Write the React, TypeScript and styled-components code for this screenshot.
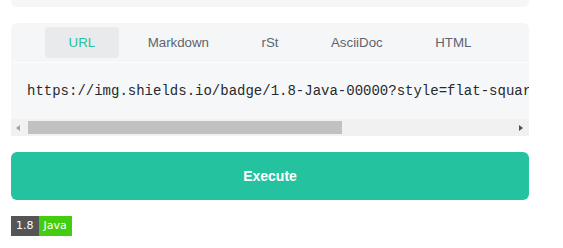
import React, { useState } from "react";
import styled, { createGlobalStyle } from "styled-components";

const Global = createGlobalStyle`
  html, body { margin: 0; padding: 0; background: #ffffff; }
  body { font-family: "Liberation Sans", Arial, sans-serif; }
`;

const Page = styled.div`
  width: 518px;
  padding-left: 11px;
  display: flex;
  flex-direction: column;
`;

const PrevCardEdge = styled.div`
  height: 7px;
  background: #f5f6f7;
  border-radius: 0 0 6px 6px;
`;

const Card = styled.div`
  margin-top: 16px;
  background: #f5f6f7;
  border-radius: 6px 6px 0 0;
  overflow: hidden;
  display: flex;
  flex-direction: column;
`;

const TabList = styled.div`
  display: flex;
  justify-content: center;
  gap: 4.5px;
  padding: 4px 0 4px;
  border-bottom: 1px solid #fdfdfe;
`;

const Tab = styled.button<{ $active?: boolean }>`
  border: 0;
  margin: 0;
  height: 31px;
  padding: 0 24px;
  border-radius: 4px;
  background: ${(p) => (p.$active ? "#e9eaec" : "transparent")};
  color: ${(p) => (p.$active ? "#25c2a0" : "#5c6470")};
  font-family: "Liberation Sans", Arial, sans-serif;
  font-size: 13.3px;
  cursor: pointer;
`;

const CodeBox = styled.div`
  background: #f6f7f8;
  overflow: hidden;
  padding: 16px;
  height: 24px;
`;

const Code = styled.pre`
  margin: 0;
  margin-top: -1px;
  font-family: "Liberation Mono", "Courier New", monospace;
  font-size: 14px;
  line-height: 26px;
  color: #262a2f;
  white-space: pre;
`;

const ScrollTrack = styled.div`
  height: 17px;
  background: #f1f1f1;
  display: flex;
  align-items: center;
  padding: 0 6px 0 5px;
`;

const Arrow = styled.span<{ $dir: "left" | "right"; $enabled?: boolean }>`
  width: 0;
  height: 0;
  border-top: 3.5px solid transparent;
  border-bottom: 3.5px solid transparent;
  ${(p) =>
    p.$dir === "left"
      ? `border-right: 4px solid ${p.$enabled ? "#505050" : "#a3a3a3"};`
      : `border-left: 4px solid ${p.$enabled ? "#505050" : "#a3a3a3"};`}
`;

const ThumbArea = styled.div`
  flex: 1;
  height: 13px;
  margin: 0 6px 0 8px;
  display: flex;
`;

const Thumb = styled.div`
  height: 13px;
  background: #c1c1c1;
`;

const ExecuteButton = styled.button`
  margin-top: 16px;
  height: 48px;
  border: 0;
  border-radius: 6px;
  background: #25c2a0;
  color: #ffffff;
  font-family: "Liberation Sans", Arial, sans-serif;
  font-weight: 700;
  font-size: 14px;
  cursor: pointer;
`;

const Badge = styled.div`
  margin-top: 16px;
  display: flex;
  height: 20px;
  align-self: flex-start;
  font-family: "DejaVu Sans", Verdana, sans-serif;
  font-size: 11px;
  color: #ffffff;
`;

const BadgePart = styled.span<{ $bg: string }>`
  background: ${(p) => p.$bg};
  display: flex;
  align-items: center;
  padding: 0 5px;
  line-height: 20px;
`;

const tabs = ["URL", "Markdown", "rSt", "AsciiDoc", "HTML"];

export default function App() {
  const [active, setActive] = useState(0);
  return (
    <>
      <Global />
      <Page>
        <PrevCardEdge />
        <Card>
          <TabList>
            {tabs.map((t, i) => (
              <Tab key={t} $active={i === active} onClick={() => setActive(i)}>
                {t}
              </Tab>
            ))}
          </TabList>
          <CodeBox>
            <Code>https://img.shields.io/badge/1.8-Java-00000?style=flat-square</Code>
          </CodeBox>
          <ScrollTrack>
            <Arrow $dir="left" />
            <ThumbArea>
              <Thumb style={{ width: "64.8%" }} />
            </ThumbArea>
            <Arrow $dir="right" $enabled />
          </ScrollTrack>
        </Card>
        <ExecuteButton>Execute</ExecuteButton>
        <Badge>
          <BadgePart $bg="#555555">1.8</BadgePart>
          <BadgePart $bg="#44cc11">Java</BadgePart>
        </Badge>
      </Page>
    </>
  );
}
